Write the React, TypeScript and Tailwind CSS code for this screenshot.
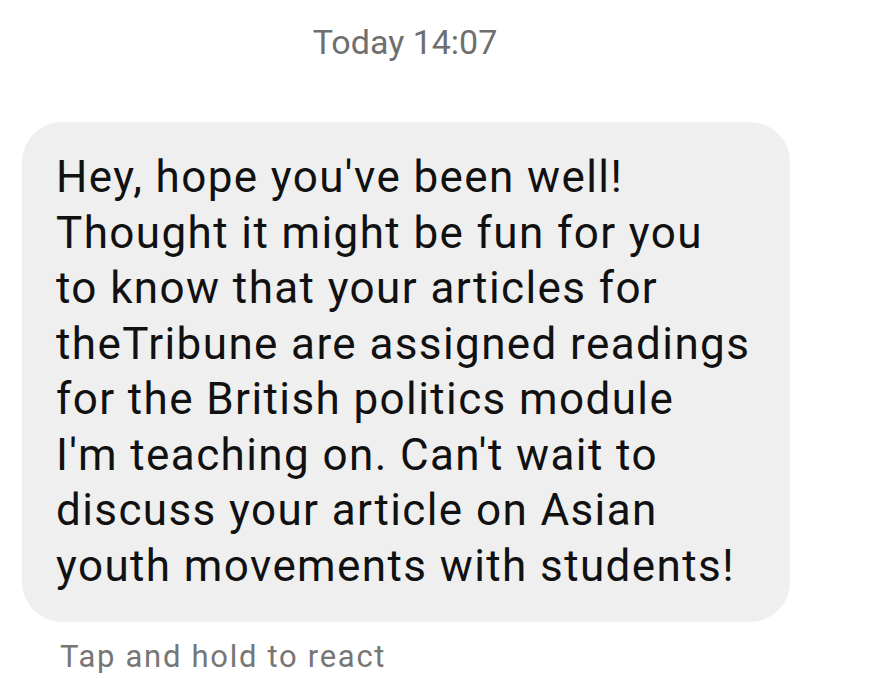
import React from "react";

const lines = [
  "Hey, hope you've been well!",
  "Thought it might be fun for you",
  "to know that your articles for",
  "theTribune are assigned readings",
  "for the British politics module",
  "I'm teaching on. Can't wait to",
  "discuss your article on Asian",
  "youth movements with students!",
];

export default function App() {
  return (
    <div
      className="w-[883px] h-[678px] bg-white overflow-hidden"
      style={{ fontFamily: "Roboto, 'Noto Sans', sans-serif" }}
    >
      <div className="w-[810px] pt-[22px] text-center text-[34px] leading-[40px] text-[#6f6f6f]">
        Today 14:07
      </div>
      <div className="mt-[60px] ml-[22px] w-[768px] rounded-[40px] bg-[#efefef] px-[34px] py-[28px] text-[44px] leading-[55.5px] tracking-[1.4px] text-[#111111]">
        {lines.map((l, i) => (
          <div key={i} className="whitespace-nowrap">
            {l}
          </div>
        ))}
      </div>
      <div className="mt-[15px] ml-[60px] text-[31px] leading-[40px] tracking-[1.7px] text-[#767676]">
        Tap and hold to react
      </div>
    </div>
  );
}
